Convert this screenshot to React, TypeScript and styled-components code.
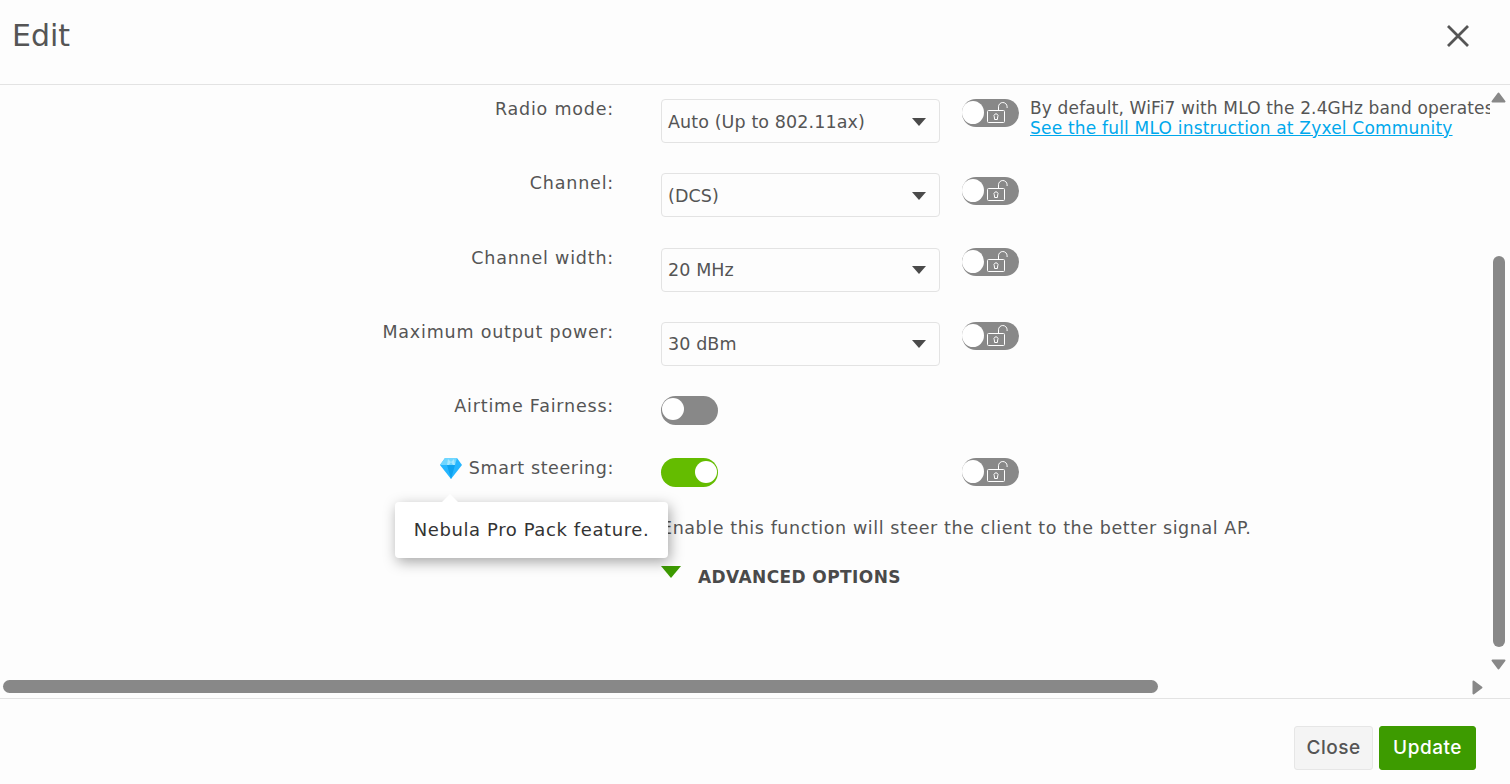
import styled, { createGlobalStyle } from "styled-components";

const GlobalStyle = createGlobalStyle`
  html, body { margin: 0; padding: 0; height: 100%; background: #fdfdfd; overflow: hidden; }
  body { font-family: "DejaVu Sans", "Noto Sans", sans-serif; color: #555; }
  * { box-sizing: border-box; }
`;

const Page = styled.div`
  width: 1510px;
  height: 784px;
  display: flex;
  flex-direction: column;
  position: relative;
  background: #fdfdfd;
`;

const Header = styled.header`
  height: 85px;
  flex: none;
  display: flex;
  align-items: center;
  justify-content: space-between;
  padding: 0 40px 13px 12px;
  border-bottom: 1px solid #e3e3e3;
`;

const Title = styled.h1`
  margin: 0;
  font-size: 30px;
  font-weight: 400;
  color: #555;
`;

const Body = styled.div`
  flex: 1;
  display: flex;
  flex-direction: column;
  min-height: 0;
`;

const Middle = styled.div`
  flex: 1;
  display: flex;
  min-height: 0;
`;

const Content = styled.div`
  width: 1490px;
  overflow: hidden;
  padding-top: 14px;
`;

const Row = styled.div<{ $h: number }>`
  display: grid;
  grid-template-columns: 613px 279px 1fr;
  column-gap: 48px;
  height: ${(p) => p.$h}px;
  width: 1700px;
`;

const Label = styled.div`
  font-size: 17.5px;
  letter-spacing: 0.8px;
  text-align: right;
  line-height: 20px;
  color: #555;
  white-space: nowrap;
  display: flex;
  justify-content: flex-end;
  align-items: flex-start;
  gap: 7px;
  margin-right: -1px;
`;

const SteerText = styled.span`
  letter-spacing: 0.6px;
`;

const Select = styled.div`
  width: 279px;
  height: 44px;
  border: 1px solid #e3e3e3;
  border-radius: 4px;
  background: #fdfdfd;
  display: flex;
  align-items: center;
  justify-content: space-between;
  padding: 1px 13px 0 6px;
  font-size: 17.5px;
  letter-spacing: 0.1px;
  color: #555;
`;

const Caret = styled.span`
  width: 0;
  height: 0;
  border-left: 7.5px solid transparent;
  border-right: 7.5px solid transparent;
  border-top: 8px solid #4a4a4a;
`;

const Side = styled.div<{ $drop?: number }>`
  display: flex;
  gap: 11px;
  margin-left: -26px;
  padding-top: ${(p) => p.$drop ?? 0}px;
  align-items: flex-start;
`;

const Pill = styled.div<{ $on?: boolean }>`
  position: relative;
  width: 57px;
  height: 29px;
  border-radius: 15px;
  background: ${(p) => (p.$on ? "#64bc00" : "#888")};
  flex: none;
`;

const Knob = styled.span<{ $on?: boolean }>`
  position: absolute;
  top: ${(p) => (p.$on ? "3px" : "2px")};
  left: ${(p) => (p.$on ? "34px" : "1px")};
  width: 22px;
  height: 22px;
  border-radius: 50%;
  background: #fff;
`;

const LockPill = styled.div`
  position: relative;
  width: 57px;
  height: 28px;
  border-radius: 14px;
  background: #888;
  flex: none;
  display: flex;
  align-items: center;
  justify-content: flex-end;
  padding-right: 11px;
`;

const LockKnob = styled.span`
  position: absolute;
  top: 2px;
  left: 0;
  width: 22px;
  height: 23px;
  border-radius: 50%;
  background: #fff;
`;

const Note = styled.div`
  font-size: 17px;
  letter-spacing: 0.15px;
  line-height: 19.5px;
  white-space: nowrap;
  color: #555;
`;

const NoteLink = styled.a`
  color: #00a8ec;
  text-decoration: underline;
  letter-spacing: 0.2px;
  display: block;
`;

const Hint = styled.div`
  font-size: 17.5px;
  letter-spacing: 0.58px;
  line-height: 20px;
  white-space: nowrap;
  color: #555;
`;

const Advanced = styled.div`
  display: flex;
  align-items: flex-start;
  gap: 17px;
  font-size: 17px;
  letter-spacing: 0.4px;
  line-height: 20px;
  font-weight: 700;
  color: #4a4a4a;
  white-space: nowrap;
  padding-top: 1px;
`;

const GreenCaret = styled.span`
  width: 0;
  height: 0;
  margin-top: -1px;
  border-left: 10.5px solid transparent;
  border-right: 10.5px solid transparent;
  border-top: 12px solid #3d9b00;
`;

const VScroll = styled.div`
  width: 20px;
  display: flex;
  flex-direction: column;
  align-items: center;
  padding: 7px 3px 10px 0;
`;

const VThumbTrack = styled.div`
  flex: 1;
  width: 12px;
  padding-top: 153px;
  display: flex;
  flex-direction: column;
`;

const Thumb = styled.div`
  width: 100%;
  height: 391px;
  border-radius: 6px;
  background: #888;
`;

const HScroll = styled.div`
  height: 18px;
  flex: none;
  display: flex;
  align-items: flex-start;
  padding: 0 0 0 3px;
`;

const HThumb = styled.div`
  width: 1155px;
  height: 13px;
  border-radius: 7px;
  background: #888;
`;

const HArrow = styled.span`
  display: block;
  flex: none;
  line-height: 0;
  margin-left: 314px;
`;

const Footer = styled.footer`
  height: 86px;
  flex: none;
  border-top: 1px solid #e3e3e3;
  display: flex;
  justify-content: flex-end;
  align-items: flex-start;
  gap: 6px;
  padding: 27px 34px 0 0;
`;

const Button = styled.button<{ $primary?: boolean }>`
  height: 44px;
  width: ${(p) => (p.$primary ? "97px" : "79px")};
  border-radius: 3px;
  border: 1px solid ${(p) => (p.$primary ? "#3d9b00" : "#e6e6e6")};
  background: ${(p) => (p.$primary ? "#3d9b00" : "#f4f4f4")};
  color: ${(p) => (p.$primary ? "#fff" : "#555")};
  font-family: "Inter", sans-serif;
  font-size: 19px;
  letter-spacing: 0.5px;
  font-weight: 500;
  padding: 0 0 2px;
`;

const CloseIcon = styled.svg`
  display: block;
`;

const Tooltip = styled.div`
  position: absolute;
  left: 395px;
  top: 502px;
  width: 273px;
  height: 56px;
  padding-bottom: 2px;
  background: #fff;
  border-radius: 4px;
  box-shadow: 2px 4px 14px rgba(0, 0, 0, 0.35);
  display: flex;
  align-items: center;
  justify-content: center;
  font-size: 18px;
  letter-spacing: 0.6px;
  color: #333;
  white-space: nowrap;
  &::before {
    content: "";
    position: absolute;
    left: 47px;
    top: -8px;
    border-left: 8px solid transparent;
    border-right: 8px solid transparent;
    border-bottom: 8px solid #fff;
  }
`;

const Lock = () => (
  <svg width="21" height="22" viewBox="0 0 21 22" fill="none" stroke="#fff" strokeWidth="1">
    <rect x="0.5" y="8.5" width="17" height="12" rx="1" />
    <path d="M11.5 8.5V4.8a4.3 4.3 0 0 1 8.6 0V6" />
    <path d="M7.6 17.5l-0.3-2.6a2 2 0 1 1 3.4 0l-0.3 2.6z" />
  </svg>
);

const Diamond = () => (
  <svg width="22" height="21" viewBox="0 0 22 21">
    <path d="M5 0h12l5 7L11 21 0 7z" fill="#25b6ff" />
    <path d="M5 0h6L7 7H0zM11 0h6l-2 7H7z" fill="#6fd6ff" />
    <path d="M8 1l3 3-2 3H7zM14 1l-3 3 2 3h2z" fill="#a6e8ff" />
    <path d="M7 7h8l-4 14z" fill="#0ea2ef" />
  </svg>
);

const rows = [
  { label: "Radio mode:", value: "Auto (Up to 802.11ax)", drop: 0 },
  { label: "Channel:", value: "(DCS)", drop: 4 },
  { label: "Channel width:", value: "20 MHz", drop: 0 },
  { label: "Maximum output power:", value: "30 dBm", drop: 0 },
];

export default function App() {
  return (
    <Page>
      <GlobalStyle />
      <Header>
        <Title>Edit</Title>
        <CloseIcon width="24" height="24" viewBox="0 0 24 24" stroke="#555" strokeWidth="2.8" fill="none">
          <path d="M2 2l20 20M22 2L2 22" />
        </CloseIcon>
      </Header>
      <Body>
        <Middle>
          <Content>
            {rows.map((r, i) => (
              <Row key={r.label} $h={74.33}>
                <Label>{r.label}</Label>
                <Select>
                  {r.value}
                  <Caret />
                </Select>
                <Side $drop={r.drop}>
                  <LockPill>
                    <LockKnob />
                    <Lock />
                  </LockPill>
                  {i === 0 && (
                    <Note>
                      By default, WiFi7 with MLO the 2.4GHz band operates in 20MHz
                      <NoteLink>See the full MLO instruction at Zyxel Community</NoteLink>
                    </Note>
                  )}
                </Side>
              </Row>
            ))}
            <Row $h={62}>
              <Label>Airtime Fairness:</Label>
              <Pill>
                <Knob />
              </Pill>
            </Row>
            <Row $h={60}>
              <Label>
                <Diamond />
                <SteerText>Smart steering:</SteerText>
              </Label>
              <Pill $on>
                <Knob $on />
              </Pill>
              <Side>
                <LockPill>
                  <LockKnob />
                  <Lock />
                </LockPill>
              </Side>
            </Row>
            <Row $h={48}>
              <span />
              <Hint>Enable this function will steer the client to the better signal AP.</Hint>
            </Row>
            <Row $h={40}>
              <span />
              <Advanced>
                <GreenCaret />
                ADVANCED OPTIONS
              </Advanced>
            </Row>
          </Content>
          <VScroll>
            <svg width="15" height="11" viewBox="0 0 15 11"><path d="M7.5 1.5l6 8H1.5z" fill="#888" stroke="#888" strokeWidth="2" strokeLinejoin="round" /></svg>
            <VThumbTrack>
              <Thumb />
            </VThumbTrack>
            <svg width="15" height="11" viewBox="0 0 15 11"><path d="M1.5 1.5h12l-6 8z" fill="#888" stroke="#888" strokeWidth="2" strokeLinejoin="round" /></svg>
          </VScroll>
        </Middle>
        <HScroll>
          <HThumb />
          <HArrow>
            <svg width="11" height="15" viewBox="0 0 11 15"><path d="M1.5 1.5l8 6-8 6z" fill="#888" stroke="#888" strokeWidth="2" strokeLinejoin="round" /></svg>
          </HArrow>
        </HScroll>
      </Body>
      <Footer>
        <Button>Close</Button>
        <Button $primary>Update</Button>
      </Footer>
      <Tooltip>Nebula Pro Pack feature.</Tooltip>
    </Page>
  );
}
